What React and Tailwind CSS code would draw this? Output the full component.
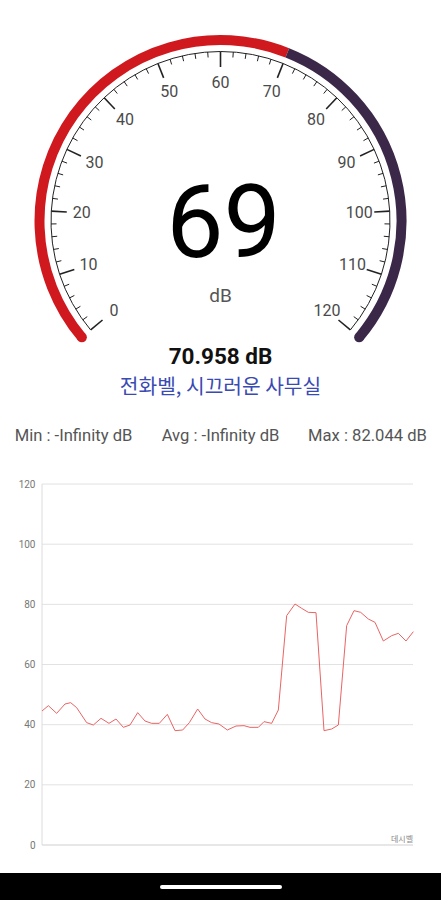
import React from "react";

const CX = 220.5;
const CY = 221;
const ang = (v) => ((v - 60) * 260) / 120;
const pt = (r, deg) => {
  const a = (deg * Math.PI) / 180;
  return [CX + r * Math.sin(a), CY - r * Math.cos(a)];
};
const arc = (r, a0, a1) => {
  const [x0, y0] = pt(r, a0);
  const [x1, y1] = pt(r, a1);
  const large = a1 - a0 > 180 ? 1 : 0;
  return `M${x0} ${y0} A${r} ${r} 0 ${large} 1 ${x1} ${y1}`;
};

const RED = "#d0191f";
const PURPLE = "#3b2849";

function Gauge() {
  const ticks = [];
  for (let v = 0; v <= 120; v += 2) {
    const major = v % 10 === 0;
    const [x0, y0] = pt(169.5, ang(v));
    const [x1, y1] = pt(major ? 154 : 164, ang(v));
    ticks.push(
      <line
        key={v}
        x1={x0}
        y1={y0}
        x2={x1}
        y2={y1}
        stroke="#222"
        strokeWidth={major ? 1.6 : 1}
      />
    );
  }
  const labels = [];
  for (let v = 0; v <= 120; v += 10) {
    const [x, y] = pt(139, ang(v));
    labels.push(
      <text
        key={v}
        x={x}
        y={y}
        textAnchor="middle"
        dominantBaseline="central"
        fontSize="16"
        fill="#4a4a4a"
        fontFamily="Roboto, sans-serif"
      >
        {v}
      </text>
    );
  }
  const split = ang(70);
  const [sx, sy] = pt(181, -130);
  const [ex, ey] = pt(181, 130);
  return (
    <svg width="441" height="343" viewBox="0 0 441 343" className="block">
      <path d={arc(181, -130, split)} stroke={RED} strokeWidth="10" fill="none" />
      <circle cx={sx} cy={sy} r="5" fill={RED} />
      <path d={arc(181, split, 130)} stroke={PURPLE} strokeWidth="10" fill="none" />
      <circle cx={ex} cy={ey} r="5" fill={PURPLE} />
      <path d={arc(169.5, -130, 130)} stroke="#222" strokeWidth="1" fill="none" />
      {ticks}
      {labels}
    </svg>
  );
}

const RAW = [
  [0, 348], [25, 332], [50, 355], [75, 327], [92, 323], [110, 338], [140, 383],
  [160, 390], [183, 370], [207, 385], [228, 372], [250, 397], [270, 390],
  [293, 353], [315, 378], [335, 385], [358, 385], [382, 358], [405, 407],
  [428, 405], [448, 383], [473, 342], [495, 372], [515, 383], [537, 387],
  [562, 405], [588, 393], [612, 392], [630, 397], [655, 397], [672, 380],
  [695, 385], [715, 345], [740, 62], [765, 27], [785, 40], [805, 52],
  [828, 53], [852, 407], [875, 402], [895, 390], [920, 92], [942, 47],
  [962, 52], [985, 72], [1005, 82], [1030, 138], [1055, 122], [1075, 115],
  [1098, 138], [1120, 110],
];

function Chart() {
  const yOf = (v) => 375 - 3.008 * v;
  const grid = [0, 20, 40, 60, 80, 100, 120];
  const points = RAW.map(([zx, zy]) => `${Math.max(42, 40 + zx / 3)},${125 + zy / 3}`).join(" ");
  return (
    <svg width="441" height="390" viewBox="0 0 441 390" className="block">
      {grid.map((v) => (
        <g key={v}>
          <line
            x1="42"
            x2="413"
            y1={yOf(v)}
            y2={yOf(v)}
            stroke={v === 0 ? "#cfcfcf" : "#e2e2e2"}
            strokeWidth="1"
          />
          <text
            x="35.5"
            y={yOf(v)}
            textAnchor="end"
            dominantBaseline="central"
            fontSize="10"
            fill="#777"
            fontFamily="Roboto, sans-serif"
          >
            {v}
          </text>
        </g>
      ))}
      <line x1="42" x2="42" y1={yOf(120)} y2={yOf(0)} stroke="#dcdcdc" strokeWidth="1" />
      <polyline points={points} fill="none" stroke="#ea6464" strokeWidth="1" strokeLinejoin="round" />
      <text
        x="413"
        y={yOf(0) - 3}
        textAnchor="end"
        fontSize="8"
        fill="#888"
        fontFamily="'Noto Sans CJK KR', sans-serif"
      >
        데시벨
      </text>
    </svg>
  );
}

export default function App() {
  return (
    <div className="w-[441px] h-[900px] bg-white flex flex-col overflow-hidden font-['Roboto',sans-serif]">
      <div className="relative h-[343px]">
        <Gauge />
        <div className="absolute inset-x-0 top-[171px] flex flex-col items-center">
          <div className="text-[102px] leading-none text-black pl-[6px]">69</div>
          <div className="mt-[13px] text-[19px] leading-none text-[#555]">dB</div>
        </div>
      </div>
      <div className="text-center text-[22.5px] leading-[26px] font-bold text-[#111]">70.958 dB</div>
      <div className="mt-[3px] text-center text-[20.3px] leading-[26px] text-[#3a4ab3] font-['Noto_Sans_CJK_KR',sans-serif]">
        전화벨, 시끄러운 사무실
      </div>
      <div className="mt-[28px] grid grid-cols-3 text-[16.6px] leading-[20px] text-[#555]">
        <div className="text-center">Min : -Infinity dB</div>
        <div className="text-center">Avg : -Infinity dB</div>
        <div className="text-center">Max : 82.044 dB</div>
      </div>
      <div className="mt-[24px]">
        <Chart />
      </div>
      <div className="mt-auto h-[27px] bg-black flex items-center justify-center">
        <div className="w-[122px] h-[4px] rounded-full bg-white" />
      </div>
    </div>
  );
}
